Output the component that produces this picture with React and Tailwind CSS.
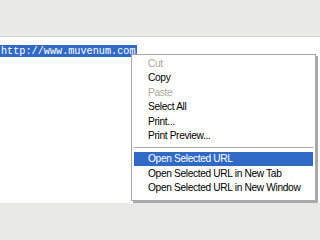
import React from 'react';

const items = [
  { label: 'Cut', disabled: true },
  { label: 'Copy' },
  { label: 'Paste', disabled: true },
  { label: 'Select All' },
  { label: 'Print...' },
  { label: 'Print Preview...' },
];

const urlItems = [
  { label: 'Open Selected URL', active: true },
  { label: 'Open Selected URL in New Tab' },
  { label: 'Open Selected URL in New Window' },
];

function MenuItem({ label, disabled, active }) {
  return (
    <div
      className={`h-[14.5px] flex items-center pl-[14px] whitespace-nowrap ${
        active ? 'bg-[#316ac5] text-white' : disabled ? 'text-[#aca899]' : 'text-black'
      }`}
    >
      {label}
    </div>
  );
}

export default function App() {
  return (
    <div className="w-[320px] h-[240px] flex flex-col bg-[#e9eae6] overflow-hidden">
      <div className="h-[36px] shrink-0" />
      <div className="h-px shrink-0 bg-[#d2d3cf]" />
      {/* page content */}
      <div className="relative h-[166px] shrink-0 bg-white">
        <div className="pt-[8px] font-['Liberation_Mono',monospace] text-[10.2px] leading-[12px]">
          <span className="bg-[#316ac5] text-white pl-[1px] pr-[1px] py-[0.5px]">http://www.muvenum.com</span>
        </div>

        {/* context menu */}
        <div className="absolute left-[131px] top-[17px] w-[185px] border border-[#a7a6aa] bg-white py-[1px] px-[2px] shadow-[2px_2px_0_#a9a9a9] font-['Liberation_Sans',Arial,sans-serif] text-[10.2px] tracking-[-0.35px]">
          {items.map((it) => (
            <MenuItem key={it.label} {...it} />
          ))}
          <div className="h-[8.5px] flex items-center">
            <div className="h-px w-full bg-[#aca899]" />
          </div>
          {urlItems.map((it) => (
            <MenuItem key={it.label} {...it} />
          ))}
          <div className="h-[4px]" />
        </div>
      </div>
      <div className="flex-1" />
    </div>
  );
}
